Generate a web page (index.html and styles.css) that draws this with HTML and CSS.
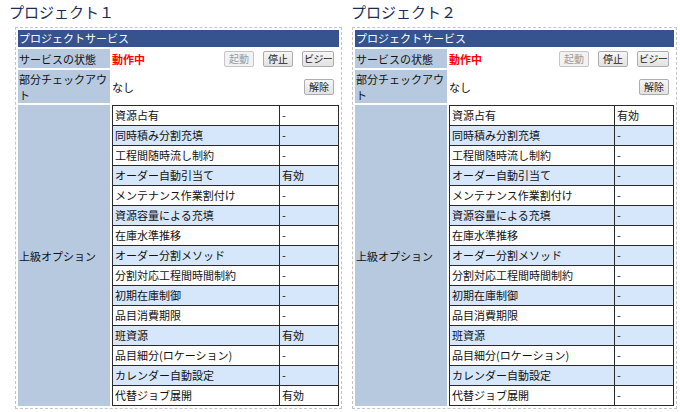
FILE: index.html
```html
<!DOCTYPE html>
<html lang="ja">
<head>
<meta charset="utf-8">
<link rel="stylesheet" href="styles.css">
</head>
<body>
<div class="page">
  <div class="proj proj-1">
    <h2 class="title">プロジェクト１</h2>
    <div class="box">
      <table class="svc">
        <tr><th class="hd" colspan="2">プロジェクトサービス</th></tr>
        <tr class="r-state">
          <td class="lbl">サービスの状態</td>
          <td class="val"><div class="line"><span class="running">動作中</span><span class="btns"><span class="btn disabled">起動</span><span class="btn">停止</span><span class="btn tight">ビジー</span></span></div></td>
        </tr>
        <tr class="r-co">
          <td class="lbl">部分チェックアウト</td>
          <td class="val"><div class="line"><span>なし</span><span class="btn">解除</span></div></td>
        </tr>
        <tr>
          <td class="lbl">上級オプション</td>
          <td class="opts">
            <table class="opt">
              <tr><td class="n">資源占有</td><td class="v">-</td></tr>
              <tr class="alt"><td class="n">同時積み分割充填</td><td class="v">-</td></tr>
              <tr><td class="n">工程間随時流し制約</td><td class="v">-</td></tr>
              <tr class="alt"><td class="n">オーダー自動引当て</td><td class="v">有効</td></tr>
              <tr><td class="n">メンテナンス作業割付け</td><td class="v">-</td></tr>
              <tr class="alt"><td class="n">資源容量による充填</td><td class="v">-</td></tr>
              <tr><td class="n">在庫水準推移</td><td class="v">-</td></tr>
              <tr class="alt"><td class="n">オーダー分割メソッド</td><td class="v">-</td></tr>
              <tr><td class="n">分割対応工程間時間制約</td><td class="v">-</td></tr>
              <tr class="alt"><td class="n">初期在庫制御</td><td class="v">-</td></tr>
              <tr><td class="n">品目消費期限</td><td class="v">-</td></tr>
              <tr class="alt"><td class="n">班資源</td><td class="v">有効</td></tr>
              <tr><td class="n">品目細分(ロケーション)</td><td class="v">-</td></tr>
              <tr class="alt"><td class="n">カレンダー自動設定</td><td class="v">-</td></tr>
              <tr><td class="n">代替ジョブ展開</td><td class="v">有効</td></tr>
            </table>
          </td>
        </tr>
      </table>
    </div>
  </div>
  <div class="proj proj-2">
    <h2 class="title">プロジェクト２</h2>
    <div class="box">
      <table class="svc">
        <tr><th class="hd" colspan="2">プロジェクトサービス</th></tr>
        <tr class="r-state">
          <td class="lbl">サービスの状態</td>
          <td class="val"><div class="line"><span class="running">動作中</span><span class="btns"><span class="btn disabled">起動</span><span class="btn">停止</span><span class="btn tight">ビジー</span></span></div></td>
        </tr>
        <tr class="r-co">
          <td class="lbl">部分チェックアウト</td>
          <td class="val"><div class="line"><span>なし</span><span class="btn">解除</span></div></td>
        </tr>
        <tr>
          <td class="lbl">上級オプション</td>
          <td class="opts">
            <table class="opt">
              <tr><td class="n">資源占有</td><td class="v">有効</td></tr>
              <tr class="alt"><td class="n">同時積み分割充填</td><td class="v">-</td></tr>
              <tr><td class="n">工程間随時流し制約</td><td class="v">-</td></tr>
              <tr class="alt"><td class="n">オーダー自動引当て</td><td class="v">-</td></tr>
              <tr><td class="n">メンテナンス作業割付け</td><td class="v">-</td></tr>
              <tr class="alt"><td class="n">資源容量による充填</td><td class="v">-</td></tr>
              <tr><td class="n">在庫水準推移</td><td class="v">-</td></tr>
              <tr class="alt"><td class="n">オーダー分割メソッド</td><td class="v">-</td></tr>
              <tr><td class="n">分割対応工程間時間制約</td><td class="v">-</td></tr>
              <tr class="alt"><td class="n">初期在庫制御</td><td class="v">-</td></tr>
              <tr><td class="n">品目消費期限</td><td class="v">-</td></tr>
              <tr class="alt"><td class="n">班資源</td><td class="v">-</td></tr>
              <tr><td class="n">品目細分(ロケーション)</td><td class="v">-</td></tr>
              <tr class="alt"><td class="n">カレンダー自動設定</td><td class="v">-</td></tr>
              <tr><td class="n">代替ジョブ展開</td><td class="v">-</td></tr>
            </table>
          </td>
        </tr>
      </table>
    </div>
  </div>
</div>
</body>
</html>
```

FILE: styles.css
```css
html, body {
  margin: 0;
  padding: 0;
  background: #ffffff;
}
body {
  font-family: "Noto Sans CJK JP", "Noto Sans", sans-serif;
  font-size: 11px;
  color: #111111;
}
.page {
  display: flex;
  padding: 2px 0 0 8px;
  gap: 8px;
}
.proj {
  display: flex;
  flex-direction: column;
}
.proj-1 { width: 334px; }
.proj-2 { width: 327px; }
.title {
  margin: 0 0 4px 1px;
  font-size: 15px;
  line-height: 20px;
  font-weight: normal;
  color: #1d2b57;
}
.box {
  border: 1px dashed #c4c4c4;
  width: 325px;
  margin-top: 1px;
}
.proj-1 .box { margin-left: 7px; }
.proj-2 .box { margin-left: 2px; width: 323px; }
.svc {
  border-collapse: separate;
  border-spacing: 2px;
  width: 100%;
}
.svc td, .svc th {
  padding: 0;
}
.hd {
  background: #36538f;
  color: #ffffff;
  text-align: left;
  font-weight: normal;
  height: 17px;
  line-height: 17px;
  padding: 0 1px !important;
}
.lbl {
  background: #b7c9df;
  width: 90px;
  padding: 0 1px !important;
  vertical-align: middle;
  line-height: 16px;
}
.r-state td { height: 19px; }
.r-co td { height: 33px; }
.val {
  vertical-align: middle;
}
.line {
  display: flex;
  align-items: center;
  justify-content: space-between;
  padding: 0 5px 0 0;
}
.running {
  color: #ff0000;
  font-weight: bold;
}
.btns {
  display: flex;
  gap: 9px;
}
.btn {
  display: inline-block;
  height: 14px;
  line-height: 14px;
  padding: 0 4px;
  border: 1px solid #adadad;
  border-radius: 2px;
  background: linear-gradient(#f6f6f6, #e2e2e2);
  font-size: 10px;
  color: #222222;
  white-space: nowrap;
}
.btn.disabled {
  color: #9a9a9a;
  border-color: #c6c6c6;
  background: #f2f2f2;
}
.btn.tight {
  padding: 0 1px;
  letter-spacing: -0.7px;
}
.opts {
  vertical-align: top;
}
.opt {
  border-collapse: collapse;
  width: 100%;
}
.opt td {
  border: 1px solid #2a2a2a;
  height: 19px;
  padding: 0 2px;
  line-height: 19px;
  background: #ffffff;
}
.opt tr.alt td {
  background: #d6e6fb;
}
.opt .v {
  width: 54px;
}
```
